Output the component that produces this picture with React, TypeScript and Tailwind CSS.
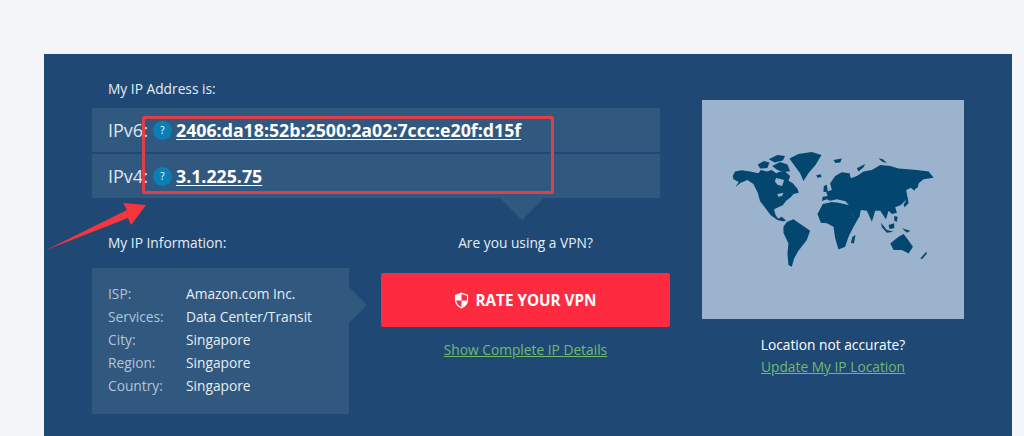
import { Fragment } from "react";

const info = [
  ["ISP:", "Amazon.com Inc."],
  ["Services:", "Data Center/Transit"],
  ["City:", "Singapore"],
  ["Region:", "Singapore"],
  ["Country:", "Singapore"],
];

function WorldMap() {
  return (
    <svg viewBox="36 32 785 653" className="block w-full h-full" fill="#03466f">
      {/* North America */}
      <path d="M128 258 L135 245 L155 241 L180 245 L205 250 L212 240 L230 245 L245 240 L258 250 L270 245 L285 245 L300 258 L295 272 L308 280 L322 296 L326 308 L310 312 L302 322 L288 332 L278 346 L268 350 L252 358 L256 374 L264 386 L275 380 L288 392 L278 394 L262 390 L242 376 L224 352 L210 334 L203 308 L190 282 L172 270 L152 278 L136 291 L146 276 L130 268 Z" />
      <path d="M258 264 L282 270 L276 288 L262 284 L254 274 Z" fill="#9bb3cd" />
      <path d="M262 312 L280 308 L276 318 L264 320 Z" fill="#9bb3cd" />
      {/* Arctic islands */}
      <path d="M203 224 L222 213 L238 218 L232 234 L210 236 Z" />
      <path d="M236 208 L262 195 L285 198 L278 212 L254 218 Z" />
      <path d="M246 228 L270 216 L292 224 L300 244 L280 246 L262 240 Z" />
      {/* Greenland */}
      <path d="M298 206 L325 192 L365 186 L394 195 L376 225 L355 250 L340 273 L330 250 L315 230 Z" />
      <path d="M378 256 L392 253 L394 261 L382 263 Z" />
      {/* South America */}
      <path d="M280 410 L290 396 L310 388 L335 405 L360 422 L350 450 L325 482 L312 505 L305 530 L295 525 L292 490 L295 460 L280 428 Z" />
      {/* Africa */}
      <path d="M382 372 L398 342 L425 336 L445 338 L478 346 L490 385 L510 375 L490 410 L475 440 L465 470 L445 478 L435 445 L430 410 L410 400 L392 398 Z" />
      <path d="M487 440 L496 435 L491 460 L482 458 Z" />
      {/* Eurasia */}
      <path d="M395 333 L398 320 L412 318 L408 305 L425 300 L420 280 L435 258 L455 247 L478 250 L482 265 L500 258 L520 245 L545 240 L570 225 L600 228 L625 236 L680 240 L715 245 L730 263 L700 268 L685 280 L672 302 L662 293 L648 300 L652 325 L632 345 L615 352 L620 368 L605 372 L595 362 L587 388 L570 362 L555 362 L545 395 L530 362 L512 360 L507 382 L490 385 L476 345 L466 334 L440 328 L420 332 L410 328 Z" />
      {/* Islands */}
      <path d="M401 288 L410 284 L413 305 L400 306 Z" />
      <path d="M430 210 L455 206 L450 218 L436 219 Z" />
      <path d="M565 205 L578 208 L590 220 L575 215 Z" />
      <path d="M500 235 L525 222 L520 232 L505 245 Z" />
      <path d="M640 345 L652 320 L655 340 L643 352 Z" />
      <path d="M672 298 L685 278 L683 292 Z" />
      <path d="M572 398 L590 420 L610 425 L590 428 L575 412 Z" />
      <path d="M595 405 L612 400 L612 415 L598 417 Z" />
      <path d="M612 378 L622 380 L620 395 L612 392 Z" />
      <path d="M635 415 L660 422 L650 428 Z" />
      {/* Australia */}
      <path d="M600 460 L625 440 L640 432 L650 445 L668 470 L655 490 L635 480 L610 480 Z" />
      <path d="M690 505 L708 485 L710 490 L696 507 Z" />
    </svg>
  );
}

export default function App() {
  return (
    <div className="relative h-[436px] overflow-hidden bg-[#f3f5f8] pt-[54px] pl-[44px] font-['Open_Sans',sans-serif]">
      <div className="flex w-[968px] h-[400px] bg-[#1f4875] pl-[48px] pt-[25px] text-[#e6edf4]">
        <div className="w-[578px]">
          <div className="pl-[16px] text-[13.75px] leading-[20px]">My IP Address is:</div>

          <div className="mt-[9px] flex flex-col gap-[2px] w-[568px]">
            <div className="flex items-center h-[44px] bg-[#31587f] pl-[16px]">
              <span className="text-[18px] w-[45px] text-[#dfe7ef]">IPv6:</span>
              <span className="flex items-center justify-center w-[19px] h-[19px] rounded-full bg-[#0a7fb5] text-[10px] text-white">?</span>
              <a className="ml-[4px] text-[17.75px] font-bold text-white underline underline-offset-2 decoration-1">2406:da18:52b:2500:2a02:7ccc:e20f:d15f</a>
            </div>
            <div className="flex items-center h-[44px] bg-[#31587f] pl-[16px]">
              <span className="text-[18px] w-[45px] text-[#dfe7ef]">IPv4:</span>
              <span className="flex items-center justify-center w-[19px] h-[19px] rounded-full bg-[#0a7fb5] text-[10px] text-white">?</span>
              <a className="ml-[4px] text-[17.75px] font-bold text-white underline underline-offset-2 decoration-1">3.1.225.75</a>
            </div>
          </div>

          <div className="flex">
            {/* Left: info box */}
            <div className="w-[289px]">
              <div className="pl-[16px] pt-[35px] text-[13.75px] leading-[20px]">My IP Information:</div>
              <div className="relative mt-[15px] w-[257px] h-[146px] bg-[#31587f] pl-[16px] pt-[14px]">
                <div className="grid grid-cols-[78px_1fr] text-[13.75px] leading-[23px]">
                  {info.map(([k, v]) => (
                    <Fragment key={k}>
                      <span className="text-[#b4c5d6]">{k}</span>
                      <span className="text-[#e6edf4]">{v}</span>
                    </Fragment>
                  ))}
                </div>
                <div className="absolute left-full top-[19px] w-0 h-0 border-y-[18px] border-y-transparent border-l-[18px] border-l-[#31587f]" />
              </div>
            </div>

            {/* Middle: VPN */}
            <div className="relative w-[289px] flex flex-col items-center">
              <div className="absolute left-[119px] top-0 w-0 h-0 border-x-[22px] border-x-transparent border-t-[22px] border-t-[#31587f]" />
              <div className="pt-[35px] text-[13.75px] leading-[20px]">Are you using a VPN?</div>
              <button className="mt-[20px] flex items-center justify-center gap-[6px] w-full h-[54px] rounded-[2px] bg-[#fe2a3f] text-[15.25px] font-bold text-white">
                <svg viewBox="0 0 16 18" className="w-[15px] h-[17px]">
                  <path d="M8 .5 15 3v5.500c0 4-3 7.500-7 9-4-1.500-7-5-7-9V3Z" fill="#fff" />
                  <path d="M8 2 8 9 13.800 9C13.800 8.700 13.800 8.500 13.800 8.200V4ZM8 9 2.200 9C2.700 12 5 14.700 8 16Z" fill="#fe2a3f" />
                </svg>
                RATE YOUR VPN
              </button>
              <a className="mt-[13px] text-[13.75px] leading-[20px] text-[#6fbb6f] underline">Show Complete IP Details</a>
            </div>
          </div>
        </div>

        {/* Right: map */}
        <div className="ml-[32px] w-[262px] pt-[21px] flex flex-col items-center">
          <div className="w-[262px] h-[219px] bg-[#9bb3cd]">
            <WorldMap />
          </div>
          <div className="mt-[15px] text-[13.75px] leading-[22px] text-white">Location not accurate?</div>
          <a className="text-[13.75px] leading-[22px] text-[#6fbb6f] underline">Update My IP Location</a>
        </div>
      </div>

      {/* Annotation overlays */}
      <div className="absolute left-[142px] top-[116px] w-[412px] h-[78px] border-[3px] border-[#df3f49] rounded-[2px]" />
      <svg className="absolute left-0 top-0 w-[200px] h-[260px]" viewBox="0 0 200 260">
        <path d="M46 250 L127 210 L123 203 L146 205 L131 225 L128 218 Z" fill="#f4373f" />
      </svg>
    </div>
  );
}
